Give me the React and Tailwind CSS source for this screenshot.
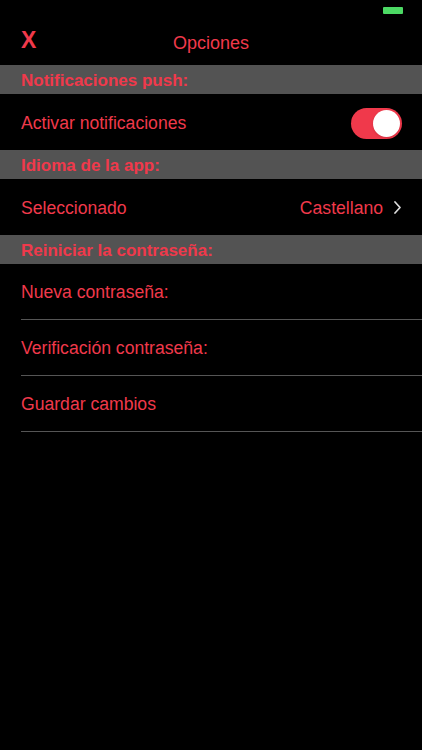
import { useState } from 'react';

const red = 'text-[#f0394b]';

function SectionHeader({ children }) {
  return (
    <div className={`h-[29px] bg-[#535353] px-[21px] pt-[2px] flex items-center text-[17px] font-bold ${red}`}>
      {children}
    </div>
  );
}

function Toggle({ on, onChange }) {
  return (
    <button
      onClick={() => onChange(!on)}
      className={`relative w-[51px] h-[31px] rounded-full ${on ? 'bg-[#f0394b]' : 'bg-[#3a3a3a]'}`}
    >
      <span
        className={`absolute top-[2px] w-[27px] h-[27px] rounded-full bg-white shadow ${on ? 'left-[22px]' : 'left-[2px]'}`}
      />
    </button>
  );
}

export default function App() {
  const [notifs, setNotifs] = useState(true);

  return (
    <div className="w-[422px] h-[750px] bg-black font-['Liberation_Sans',Arial,sans-serif] text-[17.6px] overflow-hidden">
      {/* barra de estado */}
      <div className="h-[20px] flex justify-end items-start pt-[7px] pr-[19px]">
        <div className="w-[20px] h-[7px] bg-[#4cd964] rounded-[1px]" />
      </div>

      {/* navegación */}
      <div className="relative h-[45px] flex items-center justify-center">
        <span className={`absolute left-[21px] top-[9px] text-[23px] font-bold leading-none ${red}`}>X</span>
        <span className={`text-[18px] ${red} mt-[2px]`}>Opciones</span>
      </div>

      <SectionHeader>Notificaciones push:</SectionHeader>
      <div className="h-[56px] flex items-center justify-between pl-[21px] pr-[20px] pt-[2px]">
        <span className={red}>Activar notificaciones</span>
        <Toggle on={notifs} onChange={setNotifs} />
      </div>

      <SectionHeader>Idioma de la app:</SectionHeader>
      <div className="h-[56px] flex items-center justify-between pl-[21px] pr-[21px] pt-[2px]">
        <span className={red}>Seleccionado</span>
        <div className="flex items-center gap-[11px]">
          <span className={red}>Castellano</span>
          <svg width="7" height="13" viewBox="0 0 7 13" fill="none">
            <path d="M1 1L6 6.5L1 12" stroke="#dcdcdc" strokeWidth="1.7" strokeLinecap="round" strokeLinejoin="round" />
          </svg>
        </div>
      </div>

      <SectionHeader>Reiniciar la contraseña:</SectionHeader>
      <div className="pl-[21px]">
        {['Nueva contraseña:', 'Verificación contraseña:', 'Guardar cambios'].map((label) => (
          <div key={label} className="h-[56px] flex items-center border-b border-[#555] pt-[2px]">
            <span className={red}>{label}</span>
          </div>
        ))}
      </div>
    </div>
  );
}
